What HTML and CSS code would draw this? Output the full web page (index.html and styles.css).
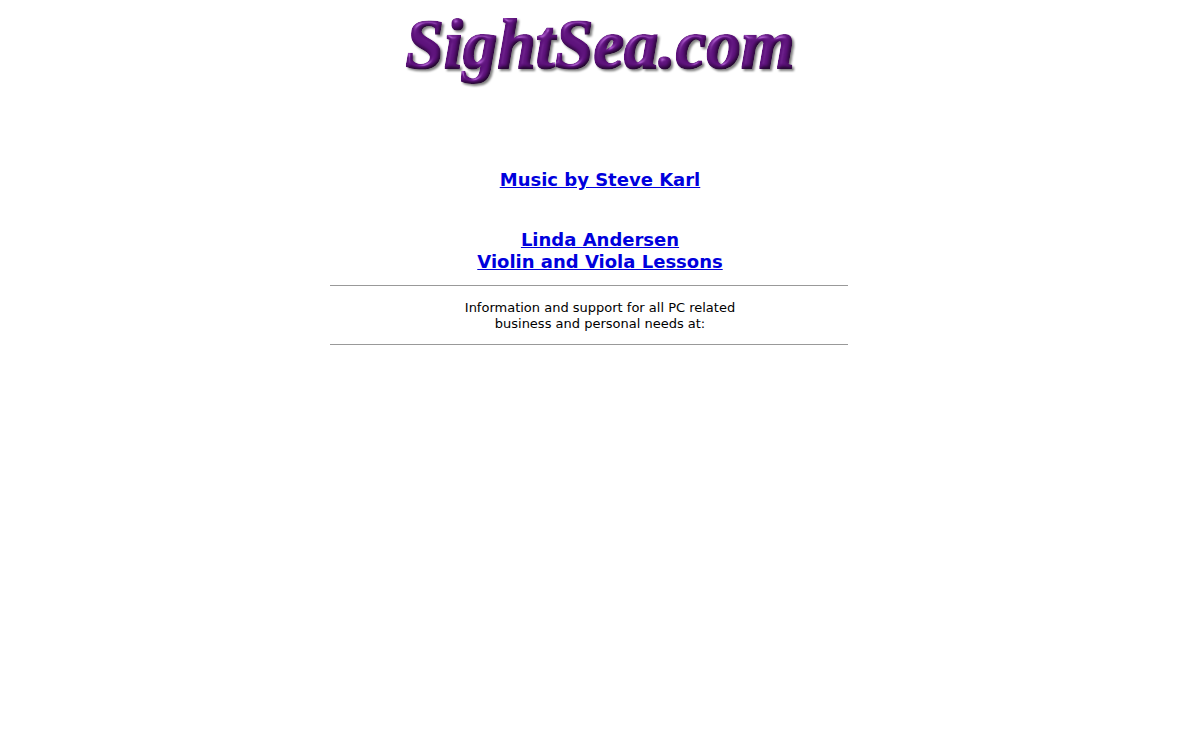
FILE: index.html
```html
<!DOCTYPE html>
<html lang="en">

<head>
  <meta charset="UTF-8">
  <meta name="viewport" content="width=device-width, initial-scale=1.0">
  <title>SightSea.com</title>
  <link rel="stylesheet" href="styles.css">
</head>

<body>
  <div class="page">
    <h1 class="logo">
      <svg width="440" height="100" viewBox="0 0 440 100">
        <defs>
          <!-- bevel and soft shadow for the lettering -->
          <filter id="bevel" x="-5%" y="-10%" width="110%" height="130%" color-interpolation-filters="sRGB">
            <feMorphology in="SourceGraphic" operator="dilate" radius="0.5" result="heavy" />
            <feGaussianBlur in="heavy" stdDeviation="2" result="soft" />
            <feDiffuseLighting in="soft" surfaceScale="2" diffuseConstant="1.3" lighting-color="#ffffff" result="light">
              <feDistantLight azimuth="240" elevation="52" />
            </feDiffuseLighting>
            <feComposite in="heavy" in2="light" operator="arithmetic" k1="1" result="shaded" />
            <feSpecularLighting in="soft" surfaceScale="3" specularConstant="0.4" specularExponent="20" lighting-color="#c8b4d0" result="shine">
              <feDistantLight azimuth="240" elevation="30" />
            </feSpecularLighting>
            <feComposite in="shaded" in2="shine" operator="arithmetic" k2="1" k3="1" result="lit" />
            <feComposite in="lit" in2="heavy" operator="in" result="letters" />
            <feDropShadow in="letters" dx="2" dy="2" stdDeviation="1" flood-color="#000000" flood-opacity="0.5" />
          </filter>
        </defs>
        <text class="logo-text" x="220" y="68" text-anchor="middle" filter="url(#bevel)">SightSea.com</text>
      </svg>
    </h1>

    <p class="link"><a href="#music">Music by Steve Karl</a></p>
    <p class="link"><a href="#lessons">Linda Andersen<br>Violin and Viola Lessons</a></p>

    <hr>
    <p class="info">Information and support for all PC related<br>business and personal needs at:</p>
    <hr>
  </div>
</body>

</html>
```
FILE: styles.css
```css
body {
  margin: 0;
  background-color: white;
  color: black;
  font-family: Verdana, "DejaVu Sans", sans-serif;
}

.page {
  max-width: 540px;
  margin: 0 auto;
  text-align: center;
}

.logo {
  margin: 0 0 69px;
  line-height: 0;
}

.logo svg {
  max-width: 100%;
}

.logo-text {
  font-family: "Liberation Serif", serif;
  font-size: 69px;
  font-style: italic;
  font-weight: bold;
  fill: #5a1078;
}

.link {
  margin: 0 0 38px;
  font-size: 18px;
  font-weight: bold;
  line-height: 22px;
}

.link a {
  color: #0000dd;
}

.link + hr {
  margin-top: -26px;
}

hr {
  width: 96%;
  height: 1px;
  margin: 12px 0;
  border: 0;
  background-color: #999999;
}

.info {
  margin: 14px 0 12px;
  font-size: 13px;
  line-height: 16px;
}
```
